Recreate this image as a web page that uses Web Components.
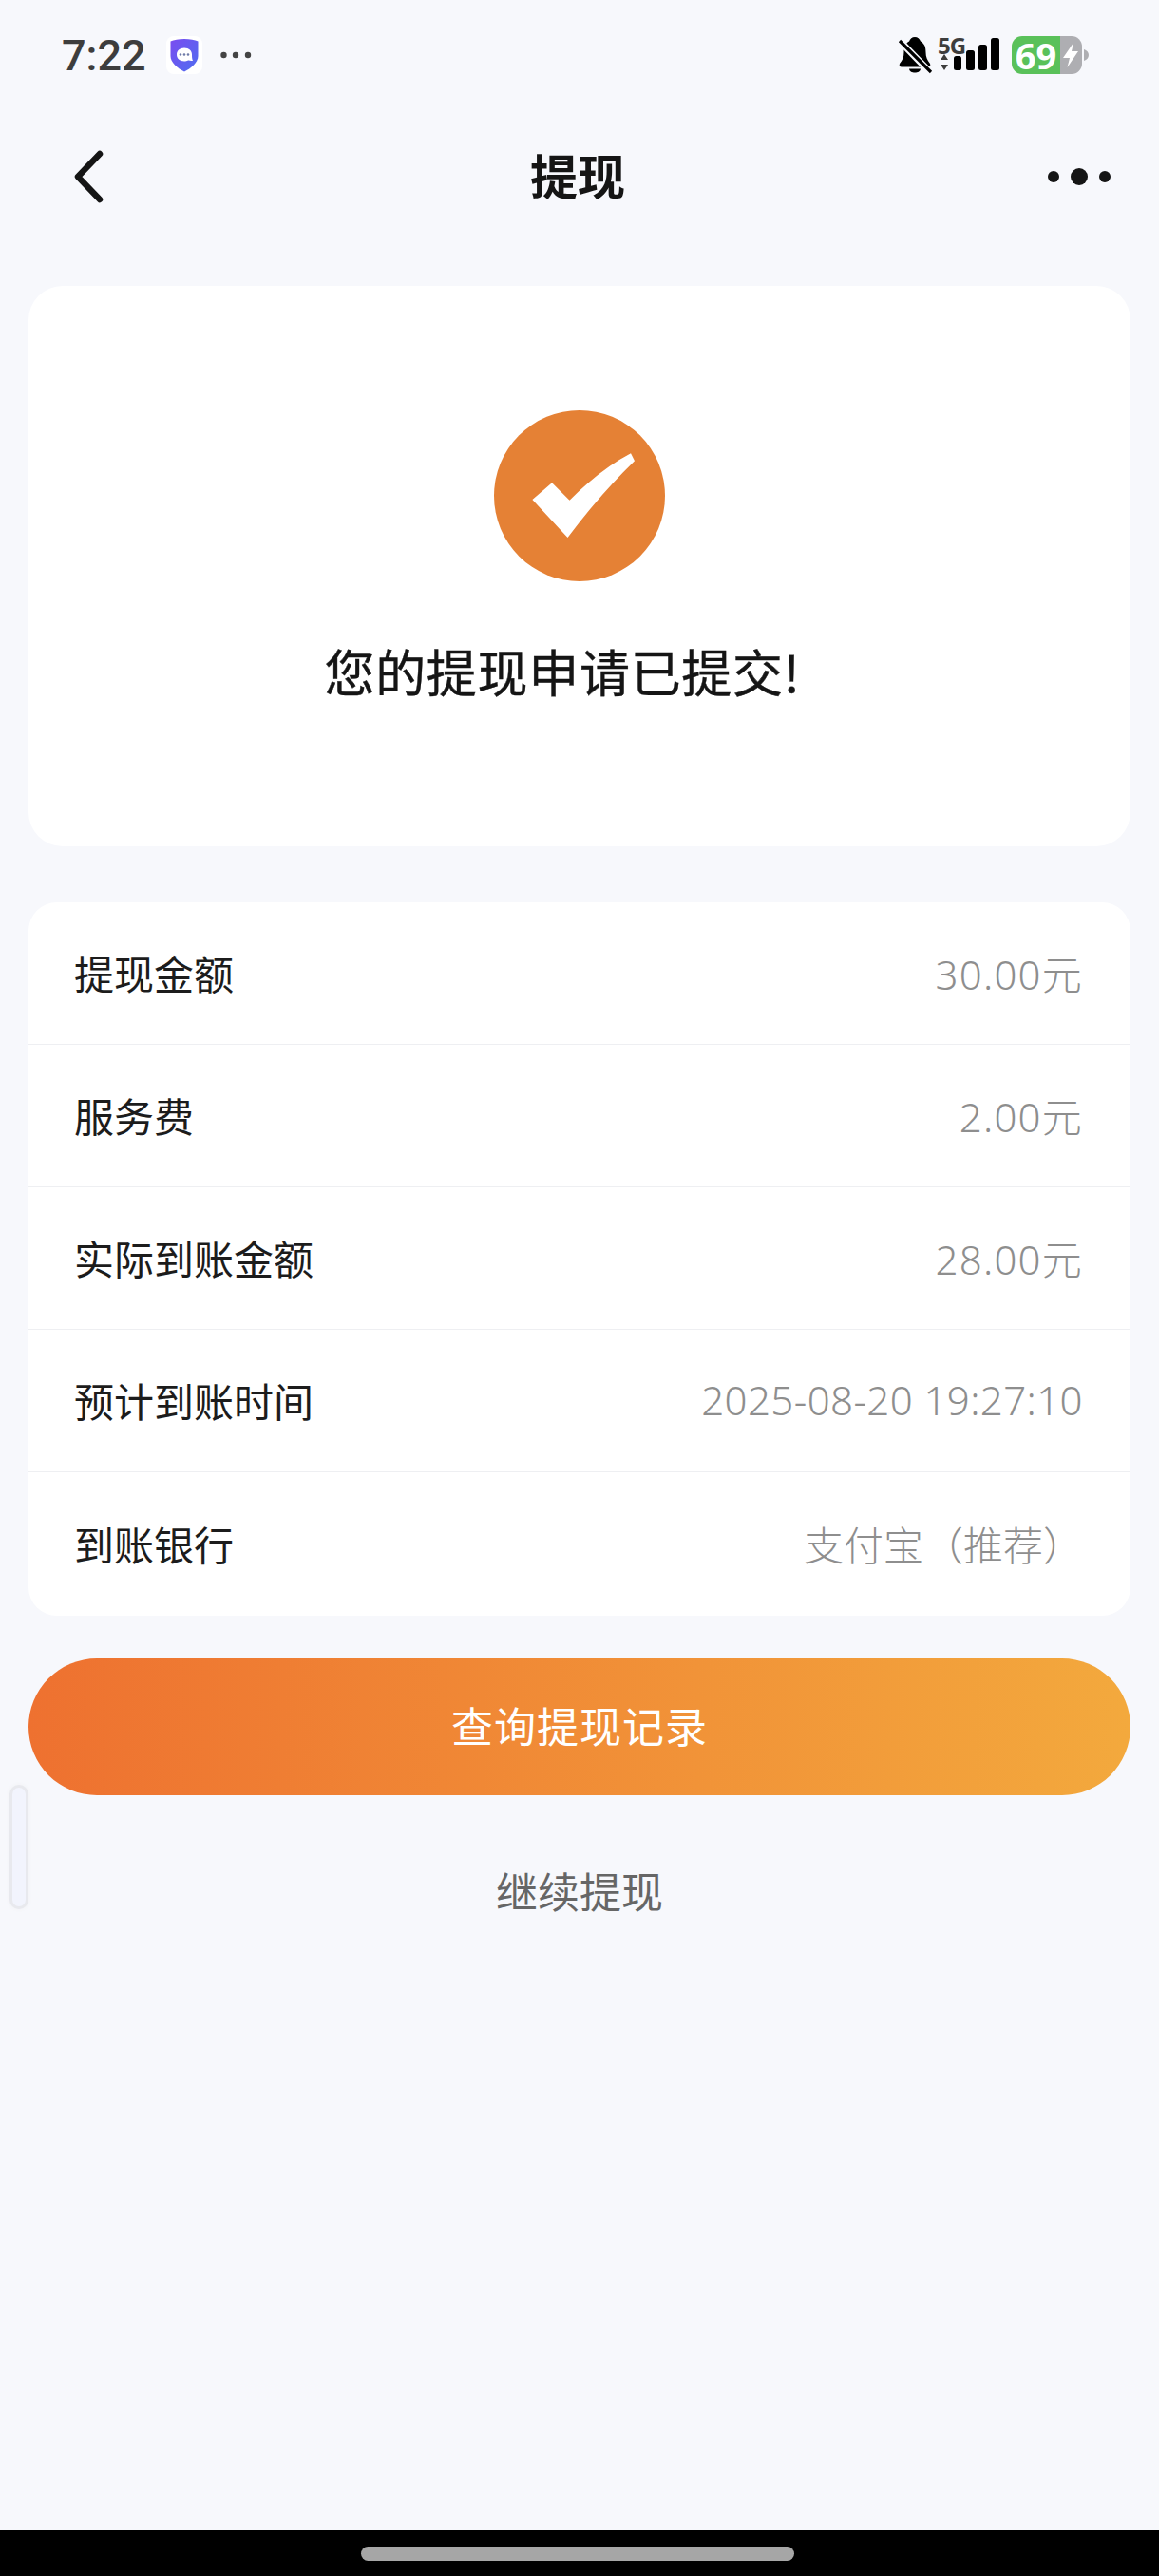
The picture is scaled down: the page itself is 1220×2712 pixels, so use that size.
<!DOCTYPE html>
<html lang="zh-CN">
<head>
<meta charset="utf-8">
<title>提现</title>
<style>
  html, body { margin: 0; height: 100%; }
  body {
    display: flex;
    flex-direction: column;
    min-height: 2712px;
    overflow: hidden;
    position: relative;
    background: #f7f8fc;
    font-family: "Noto Sans", "Noto Sans CJK SC", sans-serif;
  }
  main { flex: 1; display: flex; flex-direction: column; padding: 0 30px; }
</style>
</head>
<body>
<status-bar></status-bar>
<nav-bar>提现</nav-bar>
<main>
  <result-card>您的提现申请已提交!</result-card>
  <detail-list>
    <detail-row label="提现金额" value="30.00元" spacing="1.2"></detail-row>
    <detail-row label="服务费" value="2.00元" spacing="1.2"></detail-row>
    <detail-row label="实际到账金额" value="28.00元" spacing="1.2"></detail-row>
    <detail-row label="预计到账时间" value="2025-08-20 19:27:10" spacing=".4"></detail-row>
    <detail-row label="到账银行" value="支付宝（推荐）"></detail-row>
  </detail-list>
  <primary-button>查询提现记录</primary-button>
  <text-link>继续提现</text-link>
</main>
<gesture-bar></gesture-bar>
<side-handle></side-handle>

<script>
class StatusBar extends HTMLElement {
  constructor() {
    super();
    this.attachShadow({ mode: "open" });
  }

  connectedCallback() {
    this.shadowRoot.innerHTML = `
    <style>
      :host { display: flex; align-items: center; height: 116px; padding: 0 73px 0 65px; color: #3d3d3d; }
      .time { font: 500 45px/1 Roboto, sans-serif; margin-right: 21px; }
      .shield { display: flex; align-items: center; justify-content: center; width: 38px; height: 40px; border-radius: 8px; background: #fff; margin-right: 19px; }
      .right { margin-left: auto; display: flex; align-items: center; }
      svg { display: block; }
      .net { position: relative; width: 66px; height: 40px; margin: 0 12px 0 5px; }
      .net span { position: absolute; left: 0; top: -1px; font: 700 24px/22px "Noto Sans", sans-serif; letter-spacing: -1px; }
      .net svg { position: absolute; left: 0; top: 0; }
      .battery { display: flex; width: 74px; height: 40px; }
      .level { width: 51px; border-radius: 11px 0 0 11px; background: #5ac15a; color: #fff; font: 700 38px/40px "Noto Sans", sans-serif; text-align: center; }
      .bolt { flex: 1; border-radius: 0 11px 11px 0; background: #aeaeb2; }
    </style>
    <span class="time">7:22</span>
    <span class="shield">
      <svg width="30" height="35" viewBox="0 0 30 35">
        <defs><linearGradient id="sh" x1="0" y1="0" x2="1" y2="1"><stop offset="0" stop-color="#7a4cf0"/><stop offset="1" stop-color="#4f6ef0"/></linearGradient></defs>
        <path d="M15 0C21 0 26 1 29.500 2.500V18C29.500 25 22 31 15 34.500C8 31 .5 25 .5 18V2.500C4 1 9 0 15 0Z" fill="url(#sh)"/>
        <path d="M15 9.500C20 9.500 23 12.500 23 16.500C23 18.500 23 21 24 23C21.500 23 20 22.500 19 22.500C17.500 23.300 16.500 23.500 15 23.500C10 23.500 7 20.500 7 16.500C7 12.500 10 9.500 15 9.500Z" fill="#fff"/>
        <circle cx="11" cy="16.500" r="1.300" fill="#6f7ba8"/><circle cx="15" cy="16.500" r="1.300" fill="#6f7ba8"/><circle cx="19" cy="16.500" r="1.300" fill="#6f7ba8"/>
      </svg>
    </span>
    <svg width="33" height="8" viewBox="0 0 33 8" fill="#444">
      <circle cx="3.500" cy="4" r="3.200"/><circle cx="16" cy="4" r="3.200"/><circle cx="29" cy="4" r="3.200"/>
    </svg>
    <span class="right">
      <svg width="38" height="40" viewBox="0 0 38 40">
        <path d="M19 1C22 1 24 3 25 5.500C29.500 8 30.500 12 30.500 17C30.500 22 32 25 35 29C35.800 31 35 32.500 33 32.500H5C3 32.500 2.200 31 3 29C6 25 7.500 22 7.500 17C7.500 12 8.500 8 13 5.500C14 3 16 1 19 1Z" fill="#000"/>
        <path d="M13 34.500H25C24.500 37.500 22 38.500 19 38.500C16 38.500 13.500 37.500 13 34.500Z" fill="#000"/>
        <path d="M2 4L35 38" stroke="#f7f8fc" stroke-width="7"/>
        <path d="M3 5L36 38" stroke="#000" stroke-width="3.200"/>
      </svg>
      <span class="net">
        <span>5G</span>
        <svg width="66" height="40" viewBox="0 0 66 40">
          <path d="M7 19L11 25H3ZM7 36L3 30H11Z" fill="#3d3d3d"/>
          <rect x="17" y="21" width="8" height="15" rx="2.500" fill="#000"/>
          <rect x="30" y="15" width="9" height="21" rx="2.500" fill="#000"/>
          <rect x="43" y="9" width="9" height="27" rx="2.500" fill="#000"/>
          <rect x="56" y="2" width="9" height="34" rx="2.500" fill="#000"/>
        </svg>
      </span>
      <span class="battery">
        <span class="level">69</span>
        <span class="bolt">
          <svg width="23" height="40" viewBox="0 0 23 40"><path d="M14 7L3 23H10L7.500 33L19 16H12Z" fill="#fff"/></svg>
        </span>
      </span>
      <svg width="6" height="12" viewBox="0 0 6 12" style="margin-left:2px"><path d="M0 0C3 1 5 3 5 6C5 9 3 11 0 12Z" fill="#aeaeb2"/></svg>
    </span>
    `;
  }
}

class NavBar extends HTMLElement {
  constructor() {
    super();
    this.attachShadow({ mode: "open" });
  }

  connectedCallback() {
    this.shadowRoot.innerHTML = `
    <style>
      :host { display: flex; align-items: center; justify-content: space-between; height: 140px; padding: 0 51px 0 75px; color: #151515; }
      .title { font: 700 50px/1 "Noto Sans CJK SC", sans-serif; margin: 0 0 6px 2px; }
      svg { display: block; }
    </style>
    <svg width="36" height="58" viewBox="0 0 36 58" fill="none" stroke="#151515" stroke-width="6.500" stroke-linecap="round" stroke-linejoin="round"><path d="M30 5L7 29L30 53"/></svg>
    <span class="title"><slot></slot></span>
    <svg width="66" height="18" viewBox="0 0 66 18" fill="#151515"><circle cx="6" cy="9" r="6"/><circle cx="33" cy="9" r="9"/><circle cx="60" cy="9" r="6"/></svg>
    `;
  }
}

class ResultCard extends HTMLElement {
  constructor() {
    super();
    this.attachShadow({ mode: "open" });
  }

  connectedCallback() {
    this.shadowRoot.innerHTML = `
    <style>
      :host { display: flex; flex-direction: column; align-items: center; box-sizing: border-box; height: 590px; margin-top: 45px; padding-top: 131px; border-radius: 36px; background: #fff; }
      svg { display: block; }
      .text { margin-top: 59px; padding-right: 36px; font: 400 53px/70px "Noto Sans CJK SC", sans-serif; color: #151515; letter-spacing: .7px; -webkit-text-stroke: .4px #151515; }
    </style>
    <svg width="180" height="180" viewBox="0 0 180 180">
      <circle cx="90" cy="90" r="90" fill="#e58135"/>
      <path d="M40.400 94L61 76.300L79.500 94.700Q112 62 144 45.300L148 53.300Q112 88 77.500 134Z" fill="#fff"/>
    </svg>
    <div class="text"><slot></slot></div>
    `;
  }
}

class DetailList extends HTMLElement {
  constructor() {
    super();
    this.attachShadow({ mode: "open" });
  }

  connectedCallback() {
    this.shadowRoot.innerHTML = `
    <style>
      :host { display: block; margin-top: 59px; border-radius: 30px; background: #fff; overflow: hidden; }
      ::slotted(detail-row:last-child) { border-bottom: 0; height: 151px; }
    </style>
    <slot></slot>
    `;
  }
}

class DetailRow extends HTMLElement {
  constructor() {
    super();
    this.attachShadow({ mode: "open" });
  }

  connectedCallback() {
    const spacing = this.getAttribute("spacing") || 0;
    this.shadowRoot.innerHTML = `
    <style>
      :host { display: flex; align-items: center; justify-content: space-between; box-sizing: border-box; height: 150px; padding: 0 50px 2px 48px; border-bottom: 1px solid #eeeff2; font-size: 42px; }
      .label { color: #1c1c1c; font-family: "Noto Sans CJK SC", sans-serif; }
      .value { color: #8e8e8e; font-family: "Noto Sans", "Noto Sans CJK SC", sans-serif; font-weight: 300; letter-spacing: ${spacing}px; }
    </style>
    <span class="label">${this.getAttribute("label")}</span>
    <span class="value">${this.getAttribute("value")}</span>
    `;
  }
}

class PrimaryButton extends HTMLElement {
  constructor() {
    super();
    this.attachShadow({ mode: "open" });
  }

  connectedCallback() {
    this.shadowRoot.innerHTML = `
    <style>
      :host { display: flex; align-items: center; justify-content: center; box-sizing: border-box; height: 144px; padding-bottom: 4px; margin-top: 45px; border-radius: 72px; background: linear-gradient(90deg, #ee7130, #f3a93d); color: #fff; font: 400 44px/1 "Noto Sans CJK SC", sans-serif; letter-spacing: 1px; }
    </style>
    <slot></slot>
    `;
  }
}

class TextLink extends HTMLElement {
  constructor() {
    super();
    this.attachShadow({ mode: "open" });
  }

  connectedCallback() {
    this.shadowRoot.innerHTML = `
    <style>
      :host { display: flex; justify-content: center; margin-top: 70px; color: #666; font: 400 44px/60px "Noto Sans CJK SC", sans-serif; }
    </style>
    <slot></slot>
    `;
  }
}

class GestureBar extends HTMLElement {
  constructor() {
    super();
    this.attachShadow({ mode: "open" });
  }

  connectedCallback() {
    this.shadowRoot.innerHTML = `
    <style>
      :host { display: flex; align-items: center; justify-content: center; height: 48px; background: #000; }
      .pill { width: 456px; height: 15px; margin: 0 4px 0 0; border-radius: 8px; background: #a6a6a6; }
    </style>
    <div class="pill"></div>
    `;
  }
}

// edge handle floats over the page, it is not part of the flow
class SideHandle extends HTMLElement {
  constructor() {
    super();
    this.attachShadow({ mode: "open" });
  }

  connectedCallback() {
    this.shadowRoot.innerHTML = `
    <style>
      :host { position: absolute; left: 10px; top: 1879px; box-sizing: border-box; width: 20px; height: 131px; border: 3px solid #e8e9ee; border-radius: 10px; background: #f2f4fd; box-shadow: 0 0 4px #f0f0f3; }
    </style>
    `;
  }
}

customElements.define("status-bar", StatusBar);
customElements.define("nav-bar", NavBar);
customElements.define("result-card", ResultCard);
customElements.define("detail-list", DetailList);
customElements.define("detail-row", DetailRow);
customElements.define("primary-button", PrimaryButton);
customElements.define("text-link", TextLink);
customElements.define("gesture-bar", GestureBar);
customElements.define("side-handle", SideHandle);
</script>
</body>
</html>
